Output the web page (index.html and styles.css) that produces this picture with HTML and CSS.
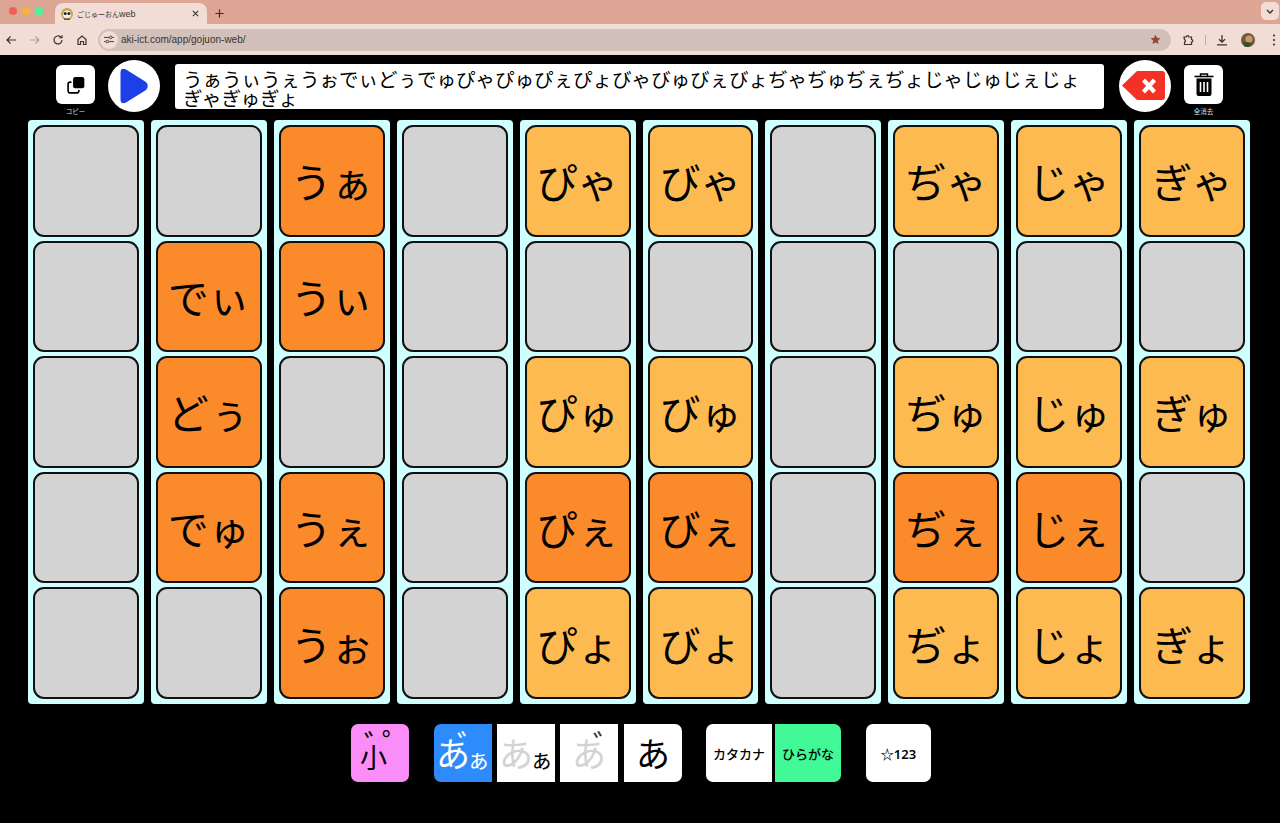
FILE: index.html
```html
<!DOCTYPE html>
<html lang="ja">
<head>
    <meta charset="UTF-8">
    <meta name="viewport" content="width=device-width, initial-scale=1.0">
    <title>ごじゅーおんweb</title>
    <link rel="stylesheet" href="styles.css">
</head>
<body>

<div class="browser">
    <div class="tabstrip">
        <div class="traffic">
            <span class="light red"></span>
            <span class="light yellow"></span>
            <span class="light green"></span>
        </div>
        <div class="tab">
            <svg class="favicon" viewBox="0 0 12 12">
                <circle cx="6" cy="6" r="6" fill="#c9a24e"/>
                <circle cx="6" cy="6.5" r="4" fill="#f4efe6"/>
                <circle cx="4.2" cy="5.6" r="1.5" fill="#222"/>
                <circle cx="7.9" cy="5.6" r="1.5" fill="#222"/>
                <path d="M3 10.5h6v1.2H3z" fill="#333"/>
            </svg>
            <span class="tab-title">ごじゅーおん<span class="tab-latin">web</span></span>
            <svg class="tab-close" viewBox="0 0 8 8"><path d="M1 1l6 6M7 1L1 7" stroke="#333" stroke-width="1.2"/></svg>
        </div>
        <svg class="new-tab" viewBox="0 0 10 10"><path d="M5 .5v9M.5 5h9" stroke="#3a2a26" stroke-width="1.3"/></svg>
        <div class="tab-menu">
            <svg viewBox="0 0 8 5"><path d="M1 1l3 3 3-3" fill="none" stroke="#3a2a26" stroke-width="1.3"/></svg>
        </div>
    </div>
    <div class="toolbar">
        <svg class="tool" viewBox="0 0 12 12"><path d="M11 6H2M5.500 2.500L2 6l3.500 3.500" fill="none" stroke="#3b3230" stroke-width="1.2"/></svg>
        <svg class="tool" viewBox="0 0 12 12"><path d="M1 6h9M6.500 2.500L10 6l-3.500 3.500" fill="none" stroke="#b49c95" stroke-width="1.2"/></svg>
        <svg class="tool" viewBox="0 0 12 12"><path d="M10 6a4 4 0 1 1-1.200-2.900M10 1.200v2.500H7.500" fill="none" stroke="#3b3230" stroke-width="1.2"/></svg>
        <svg class="tool" viewBox="0 0 12 12"><path d="M2 5.500L6 2l4 3.500V10.500H7.500V7.500h-3v3H2z" fill="none" stroke="#3b3230" stroke-width="1.200"/></svg>
        <div class="omnibox">
            <span class="site-info">
                <svg viewBox="0 0 12 10"><path d="M0 2.500h6M10 2.500h2M2 7.500h-2M6 7.500h6" stroke="#3b3230" stroke-width="1.100"/><circle cx="8" cy="2.500" r="1.600" fill="none" stroke="#3b3230" stroke-width="1.100"/><circle cx="4" cy="7.500" r="1.600" fill="none" stroke="#3b3230" stroke-width="1.100"/></svg>
            </span>
            <span class="url">aki-ict.com/app/gojuon-web/</span>
            <svg class="star" viewBox="0 0 12 12"><path d="M6 .8l1.600 3.400 3.700.5-2.700 2.600.7 3.700L6 9.200 2.700 11l.7-3.700L.7 4.700l3.700-.5z" fill="#98493a"/></svg>
        </div>
        <svg class="ext" viewBox="0 0 12 12"><path d="M2 3h2.200a1.300 1.300 0 0 1 2.600 0H9.500v2.500a1.300 1.300 0 0 1 0 2.600V10.500H2.500V8.200a1.300 1.300 0 0 0 0-2.500z" fill="none" stroke="#3b3230" stroke-width="1.200"/></svg>
        <span class="tool-sep"></span>
        <svg class="download" viewBox="0 0 12 12"><path d="M6 1v7M3 5.200L6 8.200l3-3M1 10.800h10" fill="none" stroke="#3b3230" stroke-width="1.300"/></svg>
        <svg class="avatar" viewBox="0 0 14 14">
            <circle cx="7" cy="7" r="7" fill="#6f5a3c"/>
            <circle cx="8" cy="6" r="3.600" fill="#c49a66"/>
            <path d="M1 10c3-2 7-1 10 1l-3 3H4z" fill="#3f4a34"/>
        </svg>
        <svg class="kebab" viewBox="0 0 4 12"><circle cx="2" cy="1.500" r="1.100" fill="#3b3230"/><circle cx="2" cy="6" r="1.100" fill="#3b3230"/><circle cx="2" cy="10.500" r="1.100" fill="#3b3230"/></svg>
    </div>
</div>

<div class="app">
    <div class="topbar">
        <div class="square-wrap">
            <button class="square-btn">
                <svg viewBox="0 0 24 24" class="copy-icon">
                    <rect x="8.500" y="2.500" width="13.500" height="13.500" rx="2.500" fill="#000"/>
                    <path d="M6.500 8.500H5a2.500 2.500 0 0 0-2.500 2.500v8A2.500 2.500 0 0 0 5 21.500h8a2.500 2.500 0 0 0 2.500-2.500v-1" fill="none" stroke="#000" stroke-width="2"/>
                </svg>
            </button>
            <span class="btn-label">コピー</span>
        </div>
        <button class="round-btn play">
            <svg viewBox="0 0 52 52" class="round-icon"><path d="M12.500 13 Q12.500 7 18 9.500 L38 22 Q41.500 26 38 30 L18 42.500 Q12.500 45 12.500 39 Z" fill="#1c3fe8"/></svg>
        </button>
        <div class="output">うぁうぃうぇうぉでぃどぅでゅぴゃぴゅぴぇぴょびゃびゅびぇびょぢゃぢゅぢぇぢょじゃじゅじぇじょぎゃぎゅぎょ</div>
        <button class="round-btn erase">
            <svg viewBox="0 0 52 52" class="round-icon">
                <path d="M3 25.500 L18 11 H43 Q46 11 46 14 V37 Q46 40 43 40 H18 Z" fill="#f33124"/>
                <path d="M24.500 20l11 12M35.500 20l-11 12" stroke="#fff" stroke-width="4.200"/>
            </svg>
        </button>
        <div class="square-wrap">
            <button class="square-btn">
                <svg viewBox="0 0 20 23" class="trash-icon">
                    <path d="M.5 3.500h19" stroke="#000" stroke-width="1.600"/>
                    <path d="M6.500 3V1h7v2" fill="none" stroke="#000" stroke-width="1.400"/>
                    <path d="M2.500 5.500h15V21a2 2 0 0 1-2 2h-11a2 2 0 0 1-2-2z" fill="#000"/>
                    <path d="M6.500 9v10M10 9v10M13.500 9v10" stroke="#fff" stroke-width="1.600"/>
                </svg>
            </button>
            <span class="btn-label">全消去</span>
        </div>
    </div>

    <div class="board">
        <div class="column">
            <div class="cell"></div><div class="cell"></div><div class="cell"></div><div class="cell"></div><div class="cell"></div>
        </div>
        <div class="column">
            <div class="cell"></div>
            <div class="cell orange">でぃ</div>
            <div class="cell orange">どぅ</div>
            <div class="cell orange">でゅ</div>
            <div class="cell"></div>
        </div>
        <div class="column">
            <div class="cell orange">うぁ</div>
            <div class="cell orange">うぃ</div>
            <div class="cell"></div>
            <div class="cell orange">うぇ</div>
            <div class="cell orange">うぉ</div>
        </div>
        <div class="column">
            <div class="cell"></div><div class="cell"></div><div class="cell"></div><div class="cell"></div><div class="cell"></div>
        </div>
        <div class="column">
            <div class="cell amber">ぴゃ</div>
            <div class="cell"></div>
            <div class="cell amber">ぴゅ</div>
            <div class="cell orange">ぴぇ</div>
            <div class="cell amber">ぴょ</div>
        </div>
        <div class="column">
            <div class="cell amber">びゃ</div>
            <div class="cell"></div>
            <div class="cell amber">びゅ</div>
            <div class="cell orange">びぇ</div>
            <div class="cell amber">びょ</div>
        </div>
        <div class="column">
            <div class="cell"></div><div class="cell"></div><div class="cell"></div><div class="cell"></div><div class="cell"></div>
        </div>
        <div class="column">
            <div class="cell amber">ぢゃ</div>
            <div class="cell"></div>
            <div class="cell amber">ぢゅ</div>
            <div class="cell orange">ぢぇ</div>
            <div class="cell amber">ぢょ</div>
        </div>
        <div class="column">
            <div class="cell amber">じゃ</div>
            <div class="cell"></div>
            <div class="cell amber">じゅ</div>
            <div class="cell orange">じぇ</div>
            <div class="cell amber">じょ</div>
        </div>
        <div class="column">
            <div class="cell amber">ぎゃ</div>
            <div class="cell"></div>
            <div class="cell amber">ぎゅ</div>
            <div class="cell"></div>
            <div class="cell amber">ぎょ</div>
        </div>
    </div>

    <div class="controls">
        <button class="key pink">
            <span class="mark-dakuten">゛</span><span class="mark-maru">゜</span>小
        </button>
        <div class="key-group">
            <button class="key first blue"><span class="big">あ<span class="mark-corner">゛</span></span><span class="small">ぁ</span></button>
            <button class="key flat"><span class="big faded">あ</span><span class="small">ぁ</span></button>
            <button class="key flat"><span class="big faded">あ<span class="mark-corner dark">゛</span></span></button>
            <button class="key last"><span class="big">あ</span></button>
        </div>
        <div class="key-group wide">
            <button class="key first text-key">カタカナ</button>
            <button class="key last text-key green">ひらがな</button>
        </div>
        <button class="key text-key symbols">☆123</button>
    </div>
</div>

</body>
</html>
```

FILE: styles.css
```css
* {
    margin: 0;
    padding: 0;
    box-sizing: border-box;
}

body {
    width: 1280px;
    height: 823px;
    overflow: hidden;
    background-color: #000;
    font-family: "Noto Sans CJK JP", "Noto Sans", sans-serif;
}

button {
    border: none;
    font-family: inherit;
    color: #000;
}

/* browser chrome */
.browser {
    height: 55px;
}

.tabstrip {
    display: flex;
    align-items: flex-end;
    height: 24px;
    background-color: #dca594;
}

.traffic {
    display: flex;
    gap: 5px;
    align-self: center;
    width: 55px;
    margin-top: -2px;
    padding-left: 9px;
}

.light {
    width: 8px;
    height: 8px;
    border-radius: 50%;
}

.red { background-color: #ef5f55; }
.yellow { background-color: #f3b43c; }
.green { background-color: #4fc24a; }

.tab {
    display: flex;
    align-items: center;
    width: 152px;
    height: 21px;
    padding: 0 8px 0 6px;
    border-radius: 8px 8px 0 0;
    background-color: #f1dcd6;
}

.favicon {
    width: 12px;
    height: 12px;
    margin-right: 4px;
}

.tab-title {
    flex: 1;
    font-size: 7px;
    color: #3b3230;
}

.tab-latin {
    font-family: "Liberation Sans", sans-serif;
    font-size: 9px;
}

.tab-close {
    width: 7px;
    height: 7px;
}

.new-tab {
    width: 9px;
    height: 9px;
    margin: 0 0 6px 8px;
}

.tab-menu {
    display: flex;
    align-items: center;
    justify-content: center;
    width: 18px;
    height: 18px;
    margin: 0 1px 4px auto;
    border-radius: 5px;
    background-color: #f1dcd6;
}

.tab-menu svg {
    width: 8px;
    height: 5px;
}

.toolbar {
    display: flex;
    align-items: center;
    height: 31px;
    padding-left: 5px;
    background-color: #f1dcd6;
}

.tool {
    width: 12px;
    height: 12px;
    margin-right: 11.500px;
}

.omnibox {
    display: flex;
    align-items: center;
    width: 1073px;
    height: 22px;
    margin-left: -1px;
    border-radius: 11px;
    background-color: #d1c1ba;
}

.site-info {
    display: flex;
    align-items: center;
    justify-content: center;
    width: 18px;
    height: 18px;
    margin: 0 3px 0 2px;
    border-radius: 50%;
    background-color: #f1dcd6;
}

.site-info svg {
    width: 10px;
    height: 9px;
}

.url {
    flex: 1;
    font-family: "Liberation Sans", sans-serif;
    font-size: 10px;
    color: #3b3230;
}

.star {
    width: 11px;
    height: 11px;
    margin-right: 10px;
}

.ext {
    width: 12px;
    height: 12px;
    margin-left: 11px;
}

.tool-sep {
    width: 1px;
    height: 10px;
    margin: 0 10px 0 11px;
    background-color: #d9a597;
}

.download {
    width: 12px;
    height: 12px;
    margin-right: 13px;
}

.avatar {
    width: 14px;
    height: 14px;
    margin-right: 17px;
}

.kebab {
    width: 4px;
    height: 12px;
}

/* app */
.app {
    display: flex;
    flex-direction: column;
}

.topbar {
    display: flex;
    align-items: flex-start;
    height: 65px;
    padding: 0 0 0 56px;
}

.square-wrap {
    position: relative;
    width: 39px;
    height: 39px;
    margin-top: 10px;
}

.square-btn {
    display: flex;
    align-items: center;
    justify-content: center;
    width: 39px;
    height: 39px;
    border-radius: 6px;
    background-color: #fff;
}

.copy-icon {
    width: 20px;
    height: 20px;
}

.trash-icon {
    width: 20px;
    height: 23px;
}

.btn-label {
    position: absolute;
    top: 42px;
    left: 0;
    width: 100%;
    text-align: center;
    font-size: 6.500px;
    line-height: 9px;
    color: #ddd;
}

.round-btn {
    width: 52px;
    height: 52px;
    margin-top: 5px;
    border-radius: 50%;
    background-color: #fff;
    flex-shrink: 0;
}

.play {
    margin-left: 13px;
    margin-right: 15px;
}

.erase {
    margin-left: 15px;
    margin-right: 13px;
}

.round-icon {
    display: block;
    width: 52px;
    height: 52px;
}

.output {
    width: 929px;
    height: 45px;
    margin-top: 9px;
    padding: 5px 16px 0 8px;
    border-radius: 3px;
    background-color: #fff;
    font-size: 19.500px;
    line-height: 19px;
    word-break: break-all;
}

.board {
    display: grid;
    grid-template-columns: repeat(10, 1fr);
    gap: 7px;
    height: 584px;
    margin: 0 30px 0 28px;
}

.column {
    display: grid;
    grid-template-rows: repeat(5, 1fr);
    gap: 4px;
    padding: 5px;
    border-radius: 4px;
    background-color: #cfffff;
}

.cell {
    display: flex;
    align-items: center;
    justify-content: center;
    border: 2px solid #111;
    border-radius: 11px;
    background-color: #d3d3d3;
    font-size: 41px;
    line-height: 1;
}

.orange {
    background-color: #fb8a2b;
}

.amber {
    background-color: #fdba50;
}

.controls {
    display: flex;
    margin: 20px 0 0 351px;
}

.key {
    position: relative;
    display: flex;
    align-items: center;
    justify-content: center;
    width: 58px;
    height: 58px;
    border-radius: 7px;
    background-color: #fff;
}

.pink {
    margin-right: 25px;
    padding: 7px 13px 0 0;
    background-color: #fb8df8;
    font-size: 27px;
}

.mark-dakuten {
    position: absolute;
    top: 4px;
    left: 13px;
    font-size: 30px;
    line-height: 30px;
}

.mark-maru {
    position: absolute;
    top: 3px;
    left: 31px;
    font-size: 30px;
    line-height: 30px;
}

.key-group {
    display: flex;
    gap: 5px;
    margin-right: 24px;
}

.key-group .last {
    margin-left: 1px;
}

.key-group.wide {
    gap: 3px;
    margin-right: 25px;
}

.key-group.wide .last {
    margin-left: 0;
}

.first {
    border-radius: 7px 0 0 7px;
}

.last {
    border-radius: 0 7px 7px 0;
}

.flat {
    border-radius: 0;
}

.blue {
    background-color: #2e8bfb;
    color: #fff;
}

.big {
    position: relative;
    font-size: 34px;
    line-height: 1;
}

.small {
    margin-top: 10px;
    margin-left: -3px;
    font-size: 23px;
    line-height: 1;
}

.faded {
    color: #d3d3d3;
}

.mark-corner {
    position: absolute;
    top: -8px;
    left: 21px;
    font-size: 30px;
    line-height: 30px;
}

.dark {
    color: #333;
}

.text-key {
    width: 66px;
    font-size: 13px;
    font-weight: 500;
}

.green {
    background-color: #41f996;
}

.symbols {
    width: 65px;
    font-size: 13px;
    font-family: "Noto Sans", "Noto Sans CJK JP", sans-serif;
    font-weight: 600;
}
```
